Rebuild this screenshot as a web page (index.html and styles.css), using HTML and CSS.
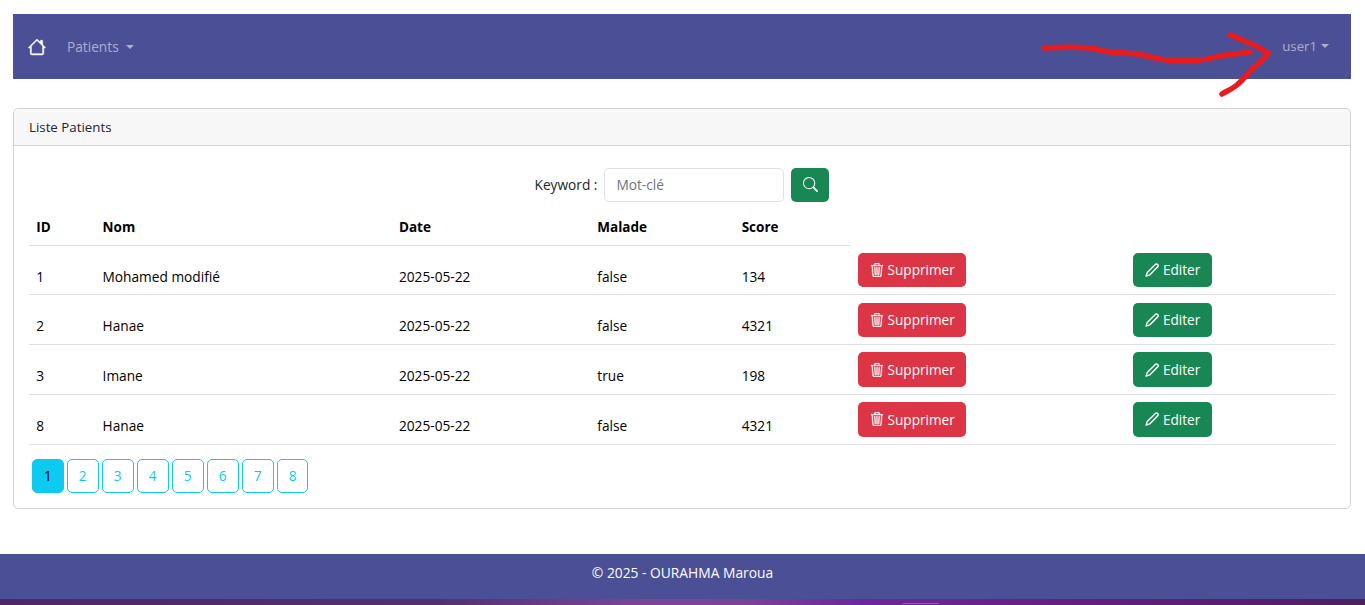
FILE: index.html
```html
<!DOCTYPE html>
<html lang="en">
<head>
  <meta charset="UTF-8">
  <meta name="viewport" content="width=device-width, initial-scale=1.0">
  <title>Liste Patients</title>
  <link rel="stylesheet" href="styles.css">
</head>
<body>
  <svg class="sprite">
    <symbol id="i-trash" viewBox="0 0 16 16">
      <path fill="currentColor" stroke="currentColor" stroke-width="0.4" d="M6.5 1h3a.5.5 0 0 1 .5.5v1H6v-1a.5.5 0 0 1 .5-.5ZM11 2.5v-1A1.5 1.5 0 0 0 9.5 0h-3A1.5 1.5 0 0 0 5 1.5v1H2.506a.58.58 0 0 0-.01 0H1.5a.5.5 0 0 0 0 1h.538l.853 10.66A2 2 0 0 0 4.885 16h6.23a2 2 0 0 0 1.994-1.84l.853-10.66h.538a.5.5 0 0 0 0-1h-.995a.59.59 0 0 0-.01 0H11Zm1.958 1-.846 10.58a1 1 0 0 1-.997.92h-6.23a1 1 0 0 1-.997-.92L3.042 3.5h9.916Zm-7.487 1a.5.5 0 0 1 .528.47l.5 8.5a.5.5 0 0 1-.998.06L5 5.03a.5.5 0 0 1 .47-.53Zm5.058 0a.5.5 0 0 1 .47.53l-.5 8.5a.5.5 0 1 1-.998-.06l.5-8.5a.5.5 0 0 1 .528-.47ZM8 4.5a.5.5 0 0 1 .5.5v8.5a.5.5 0 0 1-1 0V5a.5.5 0 0 1 .5-.5Z"/>
    </symbol>
    <symbol id="i-pencil" viewBox="0 0 16 16">
      <path fill="none" stroke="currentColor" stroke-width="1.6" stroke-linejoin="round" d="M11.8 1.6a2 2 0 0 1 2.8 2.8L5.4 13.6 1.2 15 2.6 10.8Z"/>
    </symbol>
  </svg>

  <div class="content">
    <nav class="navbar">
      <a class="nav-home" href="#">
        <svg width="18" height="18" viewBox="0 0 16 16" fill="currentColor" stroke="currentColor" stroke-width="0.5"><path d="M8.707 1.5a1 1 0 0 0-1.414 0L.646 8.146a.5.5 0 0 0 .708.708L2 8.207V13.5A1.5 1.5 0 0 0 3.5 15h9a1.5 1.5 0 0 0 1.5-1.5V8.207l.646.647a.5.5 0 0 0 .708-.708L13 5.793V2.5a.5.5 0 0 0-.5-.5h-1a.5.5 0 0 0-.5.5v1.293L8.707 1.5ZM13 7.207V13.5a.5.5 0 0 1-.5.5h-9a.5.5 0 0 1-.5-.5V7.207l5-5 5 5Z"/></svg>
      </a>
      <a class="nav-link dropdown" href="#">Patients</a>
      <a class="nav-link dropdown nav-user" href="#">user1</a>
    </nav>

    <div class="card">
      <div class="card-header">Liste Patients</div>
      <div class="card-body">
        <form class="search-form">
          <label for="keyword">Keyword :</label>
          <input type="text" id="keyword" name="keyword" placeholder="Mot-clé">
          <button type="submit" class="btn btn-success btn-search">
            <svg width="15" height="15" viewBox="0 0 16 16" fill="currentColor"><path d="M11.742 10.344a6.5 6.5 0 1 0-1.397 1.398h-.001c.03.04.062.078.098.115l3.85 3.85a1 1 0 0 0 1.415-1.414l-3.85-3.85a1.007 1.007 0 0 0-.115-.1zM12 6.5a5.5 5.5 0 1 1-11 0 5.5 5.5 0 0 1 11 0z"/></svg>
          </button>
        </form>

        <table class="table">
          <thead>
            <tr>
              <th class="col-id">ID</th>
              <th class="col-nom">Nom</th>
              <th class="col-date">Date</th>
              <th class="col-malade">Malade</th>
              <th class="col-score">Score</th>
              <th class="col-delete no-line"></th>
              <th class="no-line"></th>
            </tr>
          </thead>
          <tbody>
            <tr>
              <td>1</td><td>Mohamed modifié</td><td>2025-05-22</td><td>false</td><td>134</td>
              <td class="col-action"><a class="btn btn-danger" href="#"><svg class="icon"><use href="#i-trash"/></svg> Supprimer</a></td>
              <td class="col-action"><a class="btn btn-success" href="#"><svg class="icon"><use href="#i-pencil"/></svg> Editer</a></td>
            </tr>
            <tr>
              <td>2</td><td>Hanae</td><td>2025-05-22</td><td>false</td><td>4321</td>
              <td class="col-action"><a class="btn btn-danger" href="#"><svg class="icon"><use href="#i-trash"/></svg> Supprimer</a></td>
              <td class="col-action"><a class="btn btn-success" href="#"><svg class="icon"><use href="#i-pencil"/></svg> Editer</a></td>
            </tr>
            <tr>
              <td>3</td><td>Imane</td><td>2025-05-22</td><td>true</td><td>198</td>
              <td class="col-action"><a class="btn btn-danger" href="#"><svg class="icon"><use href="#i-trash"/></svg> Supprimer</a></td>
              <td class="col-action"><a class="btn btn-success" href="#"><svg class="icon"><use href="#i-pencil"/></svg> Editer</a></td>
            </tr>
            <tr>
              <td>8</td><td>Hanae</td><td>2025-05-22</td><td>false</td><td>4321</td>
              <td class="col-action"><a class="btn btn-danger" href="#"><svg class="icon"><use href="#i-trash"/></svg> Supprimer</a></td>
              <td class="col-action"><a class="btn btn-success" href="#"><svg class="icon"><use href="#i-pencil"/></svg> Editer</a></td>
            </tr>
          </tbody>
        </table>

        <ul class="pagination">
          <li><a class="page active" href="#">1</a></li>
          <li><a class="page" href="#">2</a></li>
          <li><a class="page" href="#">3</a></li>
          <li><a class="page" href="#">4</a></li>
          <li><a class="page" href="#">5</a></li>
          <li><a class="page" href="#">6</a></li>
          <li><a class="page" href="#">7</a></li>
          <li><a class="page" href="#">8</a></li>
        </ul>
      </div>
    </div>
  </div>

  <footer class="footer">© 2025 - OURAHMA Maroua</footer>
  <div class="desktop-strip"></div>

  <!-- red arrow scribbled over the screenshot -->
  <svg class="scribble" width="1365" height="605" viewBox="0 0 1365 605" fill="none" stroke="#e81c1f" stroke-width="5.5" stroke-linecap="round" stroke-linejoin="round">
    <path d="M1044 48 C1060 47 1078 47 1090 48 C1098 49 1102 51 1110 52 C1120 53 1128 53 1137 54 C1148 56 1156 59 1167 60 C1178 61 1190 61 1200 60 C1210 59 1218 56 1227 55 L1250 52"/>
    <path d="M1230 35 C1235 36 1240 40 1247 42 C1255 45 1262 49 1268 53 C1264 59 1259 63 1253 68 C1247 74 1243 80 1237 85 C1232 89 1227 91 1222 94"/>
  </svg>
</body>
</html>
```

FILE: styles.css
```css
body {
  margin: 0;
  font-family: "Open Sans", "Noto Sans", sans-serif;
  font-size: 13.7px;
  line-height: 21.6px;
  color: #212529;
  background-color: white;
  height: 605px;
  overflow: hidden;
  position: relative;
}
a {
  text-decoration: none;
}
.sprite {
  display: none;
}
.content {
  padding: 14px 14px 45px 13px;
}
.navbar {
  display: flex;
  align-items: center;
  height: 65px;
  padding: 0 22px 0 15px;
  background-color: #4b4f96;
}
.nav-home {
  display: flex;
  color: white;
  margin-right: 21px;
}
.nav-link {
  padding-top: 1px;
  color: rgba(255, 255, 255, 0.55);
}
.nav-user {
  margin-left: auto;
  font-size: 13.2px;
}
.dropdown::after {
  content: "";
  display: inline-block;
  margin-left: 7px;
  vertical-align: 3px;
  border-top: 4px solid;
  border-right: 4px solid transparent;
  border-left: 4px solid transparent;
}
.nav-user::after {
  margin-left: 4px;
}
.card {
  margin-top: 29px;
  border: 1px solid #d3d3d4;
  border-radius: 5px;
}
.card-header {
  padding: 8.4px 15px 6.4px;
  background-color: #f7f7f7;
  border-bottom: 1px solid #d3d3d4;
  border-radius: 5px 5px 0 0;
  font-size: 13.3px;
}
.card-body {
  padding: 14.4px 15px;
}
.search-form {
  display: flex;
  justify-content: center;
  align-items: center;
  gap: 7px;
  margin-top: 7px;
  margin-bottom: 7px;
}
.search-form input {
  width: 180px;
  height: 34.4px;
  box-sizing: border-box;
  padding: 0 11px;
  font-family: inherit;
  font-size: 13.7px;
  color: #212529;
  border: 1px solid #dee2e6;
  border-radius: 5px;
}
.search-form input::placeholder {
  color: #6c757d;
}
.btn {
  display: inline-flex;
  align-items: center;
  justify-content: center;
  gap: 4px;
  box-sizing: border-box;
  height: 34.4px;
  padding: 0 10.5px;
  border: 1px solid transparent;
  border-radius: 5px;
  color: white;
  font-family: inherit;
  font-size: 13.6px;
  vertical-align: top;
}
.btn-success {
  background-color: #198754;
}
.btn-danger {
  background-color: #dc3545;
}
.btn-search {
  width: 38px;
  padding: 0;
}
.icon {
  width: 14px;
  height: 14px;
}
.table {
  width: 100%;
  border-collapse: collapse;
  table-layout: fixed;
  color: #000;
}
.table th {
  padding: 8.2px 7.2px 6.2px;
  text-align: left;
  font-weight: 700;
  font-size: 13.5px;
  border-bottom: 1px solid #dee2e6;
}
.table th.no-line {
  border-bottom: none;
}
.table td {
  padding: 7.2px;
  vertical-align: bottom;
  border-bottom: 1px solid #dee2e6;
}
.col-id {
  width: 52px;
}
.col-nom {
  width: 282px;
}
.col-date {
  width: 184px;
}
.col-malade {
  width: 130px;
}
.col-score {
  width: 102px;
}
.col-delete {
  width: 261px;
}
.pagination {
  display: flex;
  gap: 3.4px;
  list-style: none;
  margin: 14.4px 0 0;
  padding: 0 0 0 3px;
}
.page {
  display: block;
  box-sizing: border-box;
  width: 31.6px;
  height: 34.4px;
  line-height: 32.4px;
  text-align: center;
  color: #0dcaf0;
  border: 1px solid #0dcaf0;
  border-radius: 5px;
}
.page.active {
  background-color: #0dcaf0;
  color: #000;
}
.footer {
  height: 45px;
  line-height: 38px;
  text-align: center;
  color: white;
  background-color: #4b4f96;
  font-size: 13.8px;
}
.desktop-strip {
  height: 6px;
  background:
    linear-gradient(#8e62aa, #8e62aa) 903px 4px / 36px 1px no-repeat,
    linear-gradient(90deg, #4e2766 0%, #52306f 32%, #7a4694 47%, #7a4496 54%, #6c289a 63%, #641f7f 78%, #4e1f5f 100%);
}
.scribble {
  position: absolute;
  top: 0;
  left: 0;
  pointer-events: none;
}
```
